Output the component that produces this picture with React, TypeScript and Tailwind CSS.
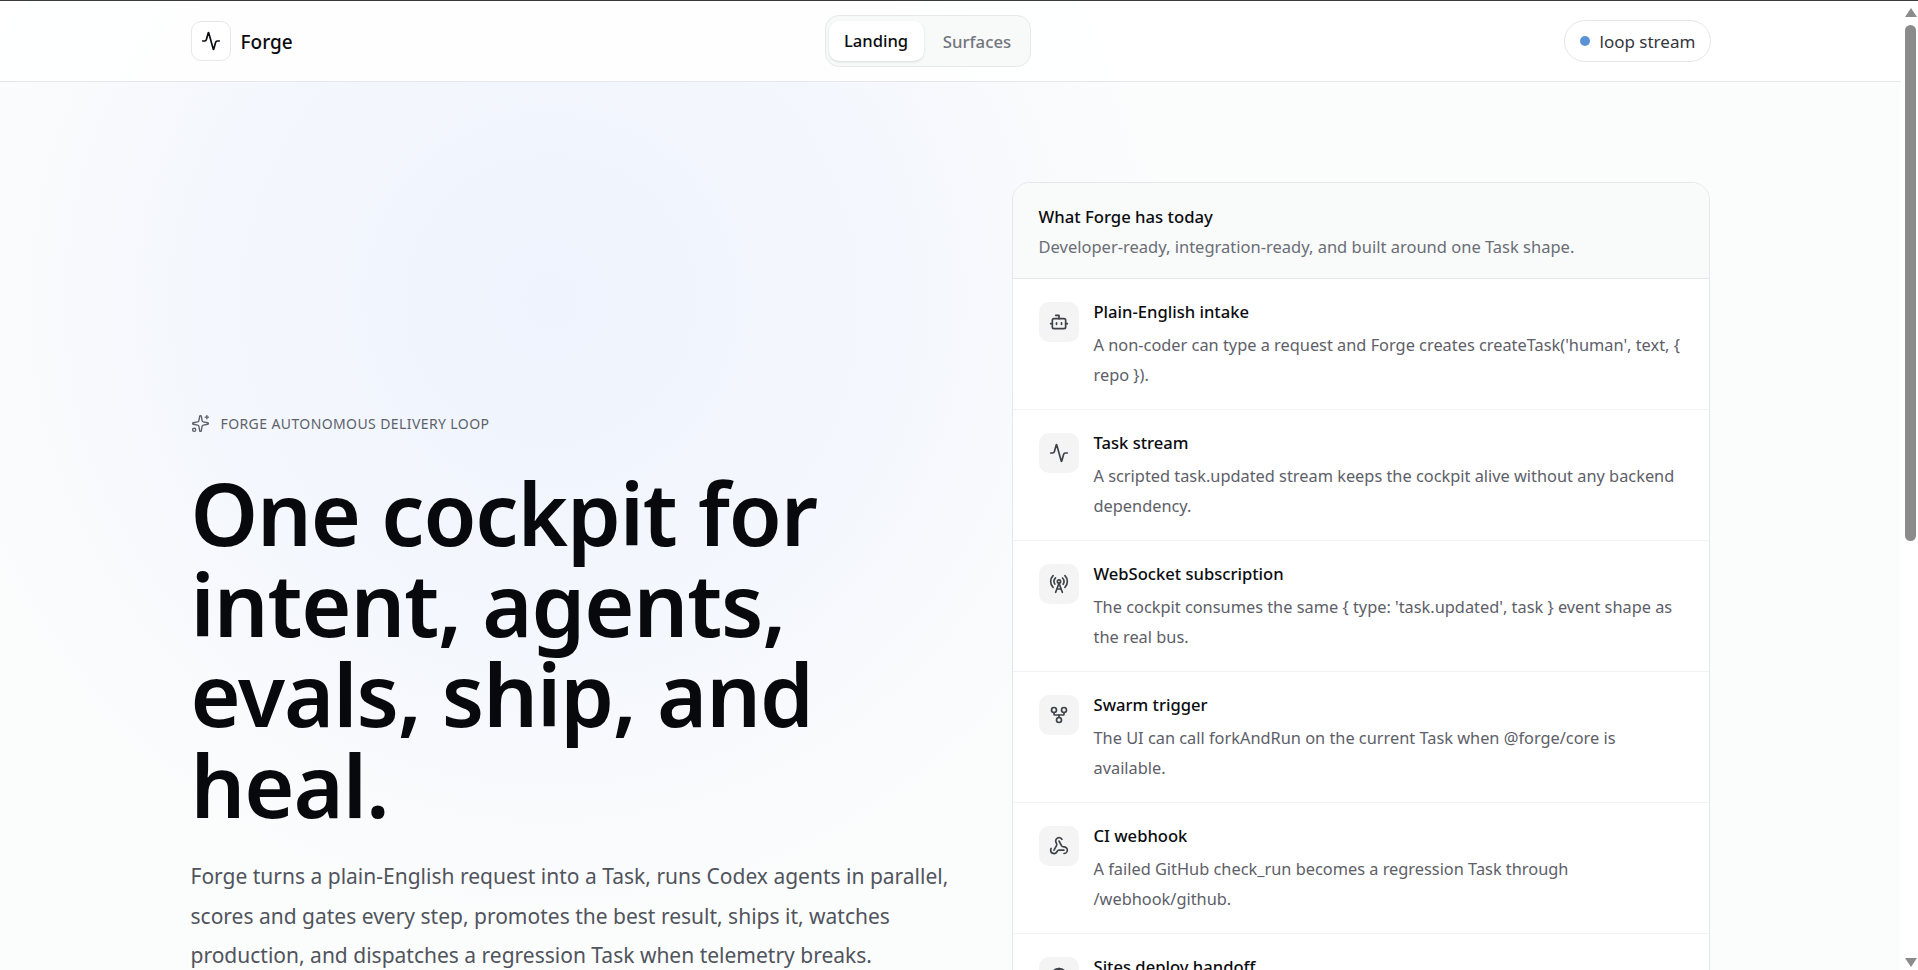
import React from "react";
import { Activity, Bot, GitFork, Globe, RadioTower, Sparkles, Webhook } from "lucide-react";

const capabilities = [
  {
    icon: Bot,
    title: "Plain-English intake",
    text: "A non-coder can type a request and Forge creates createTask('human', text, { repo }).",
  },
  {
    icon: Activity,
    title: "Task stream",
    text: "A scripted task.updated stream keeps the cockpit alive without any backend dependency.",
  },
  {
    icon: RadioTower,
    title: "WebSocket subscription",
    text: "The cockpit consumes the same { type: 'task.updated', task } event shape as the real bus.",
  },
  {
    icon: GitFork,
    title: "Swarm trigger",
    text: "The UI can call forkAndRun on the current Task when @forge/core is available.",
  },
  {
    icon: Webhook,
    title: "CI webhook",
    text: "A failed GitHub check_run becomes a regression Task through /webhook/github.",
  },
  {
    icon: Globe,
    title: "Sites deploy handoff",
    text: "",
  },
];

const Header: React.FC = () => (
  <header className="h-[81px] shrink-0 border-b border-[#e5e7ea] bg-white/90">
    <div className="mx-auto flex h-full w-[1520px] items-center justify-between">
      <div className="flex w-[101px] items-center gap-[10px]">
        <div className="flex h-10 w-10 shrink-0 items-center justify-center rounded-[10px] border border-[#e6e7e9] bg-white">
          <Activity size={20} strokeWidth={2} className="text-[#0b0c0f]" />
        </div>
        <span className="pt-[2px] text-[19px] font-medium text-[#0b0c0f]">Forge</span>
      </div>
      <nav className="flex h-[52px] w-[206px] items-center rounded-[14px] border border-[#e7e8ea] bg-[#f8f9f9] px-[3px]">
        <span className="flex h-10 w-[95px] items-center justify-center rounded-[10px] bg-white pt-[1px] text-[16.6px] font-medium text-[#0b0c0f] shadow-sm">
          Landing
        </span>
        <span className="flex h-10 flex-1 items-center justify-center pt-[1px] pl-[4px] text-[16.8px] font-medium text-[#73767d]">
          Surfaces
        </span>
      </nav>
      <div className="flex h-[42px] w-[147px] items-center gap-[10px] rounded-full border border-[#e5e6e8] bg-white pl-[15px]">
        <span className="h-[10px] w-[10px] rounded-full bg-[#5b92d6]" />
        <span className="pt-[1px] text-[17px] text-[#33363c]">loop stream</span>
      </div>
    </div>
  </header>
);

const Hero: React.FC = () => (
  <div className="pt-[331px]">
    <div className="flex items-center gap-[11px] text-[#5d626b]">
      <Sparkles size={19} strokeWidth={1.75} />
      <span className="text-[14px] tracking-[0.4px] uppercase">Forge autonomous delivery loop</span>
    </div>
    <h1 className="mt-[34px] text-[86px] leading-[90.5px] font-[560] tracking-[-1.1px] text-[#08090c]">
      One cockpit for intent, agents, evals, ship, and heal.
    </h1>
    <p className="mt-[27px] w-[775px] text-[21px] leading-[39.6px] text-[#50545d]">
      Forge turns a plain-English request into a Task, runs Codex agents in parallel, scores and gates every step,
      promotes the best result, ships it, watches production, and dispatches a regression Task when telemetry breaks.
    </p>
  </div>
);

const CapabilityCard: React.FC = () => (
  <section className="mt-[100px] overflow-hidden rounded-[18px] border border-[#e5e7ea] bg-white">
    <div className="h-[96px] border-b border-[#e5e7ea] bg-[#f9fafa] px-[26px] pt-[19px]">
      <h2 className="text-[16.7px] leading-[29px] font-medium text-[#0b0c0f]">What Forge has today</h2>
      <p className="pt-[1px] text-[16.5px] leading-[30px] text-[#6a6e76]">
        Developer-ready, integration-ready, and built around one Task shape.
      </p>
    </div>
    {capabilities.map((item) => {
      const Icon = item.icon;
      return (
        <div key={item.title} className="flex gap-[15px] border-b border-[#f1f2f3] px-[26px] pt-[21px] pb-[19px]">
          <div className="mt-[2px] flex h-10 w-10 shrink-0 items-center justify-center rounded-[10px] bg-[#f4f4f5]">
            <Icon size={20} strokeWidth={2} className="text-[#3f4147]" />
          </div>
          <div>
            <h3 className="mb-[6px] text-[16.6px] leading-[24px] font-medium text-[#0b0c0f]">{item.title}</h3>
            {item.text && <p className="text-[16.35px] leading-[30px] text-[#5d6068]">{item.text}</p>}
          </div>
        </div>
      );
    })}
  </section>
);

const Scrollbar: React.FC = () => (
  <aside className="flex w-[17px] shrink-0 flex-col items-center bg-white pt-[7px] pb-[3px] pl-[2px]">
    <div className="h-0 w-0 border-x-[6px] border-b-[9px] border-x-transparent border-b-[#8b8b8b]" />
    <div className="mt-[8px] h-[516px] w-[11px] rounded-full bg-[#8b8b8b]" />
    <div className="mt-auto h-0 w-0 border-x-[6px] border-t-[9px] border-x-transparent border-t-[#8b8b8b]" />
  </aside>
);

export default function App() {
  return (
    <div
      className="flex h-screen overflow-hidden border-t border-[#3a3a3a]"
      style={{ fontFamily: '"Noto Sans", "Open Sans", sans-serif' }}
    >
      <main className="flex min-w-0 flex-1 flex-col bg-[#fbfcfc] bg-[radial-gradient(circle_620px_at_550px_300px,#eef3fd_0%,#f4f7fd_55%,#fbfcfc_100%)]">
        <Header />
        <div className="mx-auto grid w-[1520px] grid-cols-[757px_698px] gap-x-[64px]">
          <Hero />
          <CapabilityCard />
        </div>
      </main>
      <Scrollbar />
    </div>
  );
}
